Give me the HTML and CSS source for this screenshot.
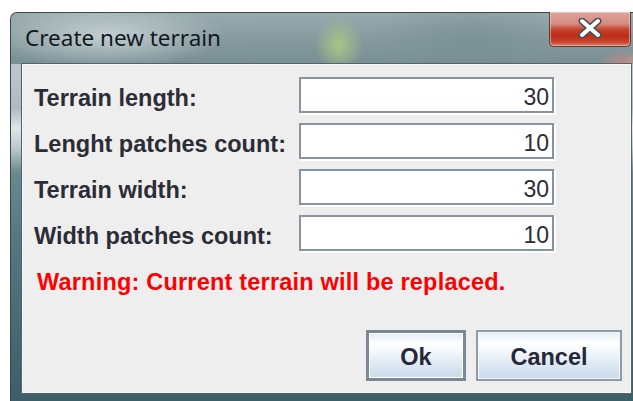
FILE: index.html
```html
<!DOCTYPE html>
<html lang="en">
<head>
<meta charset="utf-8">
<title>Create new terrain</title>
<link rel="stylesheet" href="styles.css">
</head>
<body>
<div class="window">
  <div class="titlebar">
    <span class="title">Create new terrain</span>
    <button class="close" type="button" aria-label="Close">
      <svg width="26" height="20" viewBox="0 0 26 20">
        <path d="M5 3 L21 17 M21 3 L5 17" stroke="#4a4f55" stroke-width="7" stroke-linecap="round" fill="none"/>
        <path d="M5 3 L21 17 M21 3 L5 17" stroke="#ffffff" stroke-width="4" stroke-linecap="round" fill="none"/>
      </svg>
    </button>
  </div>
  <div class="client">
    <div class="form">
      <label class="lbl" for="f-len">Terrain length:</label>
      <input class="field" id="f-len" type="text" value="30">
      <label class="lbl" for="f-lenp">Lenght patches count:</label>
      <input class="field" id="f-lenp" type="text" value="10">
      <label class="lbl" for="f-wid">Terrain width:</label>
      <input class="field" id="f-wid" type="text" value="30">
      <label class="lbl" for="f-widp">Width patches count:</label>
      <input class="field" id="f-widp" type="text" value="10">
    </div>
    <p class="warning">Warning: Current terrain will be replaced.</p>
    <div class="actions">
      <button class="btn btn-default" type="button">Ok</button>
      <button class="btn btn-cancel" type="button">Cancel</button>
    </div>
  </div>
</div>
</body>
</html>
```
FILE: styles.css
```css
html, body {
  margin: 0;
  padding: 0;
  background: #ffffff;
  overflow: hidden;
  width: 633px;
  height: 401px;
}

/* Aero-style window frame */
.window {
  margin: 12px 0 0 10px;
  width: 632px;
  height: 400px;
  box-sizing: border-box;
  border-top: 1px solid #3a4648;
  border-left: 1px solid #3a4648;
  border-radius: 7px 0 0 0;
  display: flex;
  flex-direction: column;
  background:
    linear-gradient(to bottom,
      #aab7b9 0px, #bcc7c9 60px, #aebbbe 95px, #dfe6e7 115px, #bccacc 135px,
      #6b888e 160px, #587880 220px, #4a6c73 300px, #3d5e66 389px);
}

.titlebar {
  height: 51px;
  flex: none;
  display: flex;
  align-items: flex-start;
  border-radius: 7px 0 0 0;
  background:
    radial-gradient(ellipse 24px 28px at 328px 32px, rgba(170, 200, 132, 0.95), rgba(170, 200, 132, 0) 100%),
    radial-gradient(ellipse 26px 14px at 612px 50px, rgba(220, 130, 130, 0.65), rgba(220, 130, 130, 0) 100%),
    radial-gradient(ellipse 16px 14px at 628px 52px, rgba(190, 210, 150, 0.7), rgba(190, 210, 150, 0) 100%),
    radial-gradient(ellipse 120px 34px at 95px 22px, rgba(200, 212, 215, 0.9), rgba(200, 212, 215, 0) 100%),
    radial-gradient(ellipse 100px 40px at 460px 26px, rgba(120, 142, 146, 0.7), rgba(120, 142, 146, 0) 100%),
    linear-gradient(to bottom, #98aaad 0%, #85999c 55%, #788f93 100%);
}

.title {
  font-family: "Noto Sans", "Open Sans", sans-serif;
  font-size: 22.5px;
  color: #14181f;
  padding: 11px 0 0 14px;
  line-height: 27px;
}

.close {
  margin: -1px 11px 0 auto;
  width: 82px;
  height: 35px;
  padding: 0;
  border: 1px solid #5c3a36;
  border-top: none;
  border-radius: 0 0 5px 5px;
  background:
    linear-gradient(to bottom,
      #dca49c 0%, #d58b80 35%, #c6412c 52%, #bd2c16 70%, #c6452f 88%, #d9806e 100%);
  box-shadow: inset 0 0 0 1px rgba(255, 230, 225, 0.45);
  display: flex;
  align-items: center;
  justify-content: center;
}

.close svg {
  display: block;
  margin-top: -2px;
}

/* Swing dialog content */
.client {
  flex: none;
  height: 329px;
  margin: 0 0 0 11px;
  width: 609px;
  border: 1px solid #f6f6f6;
  box-shadow: 0 0 0 1px #4f6569;
  background: #eeeeee;
  display: flex;
  flex-direction: column;
  padding: 12px 8px 11px 11px;
  box-sizing: border-box;
  font-family: "Liberation Sans", Arial, sans-serif;
}

.form {
  display: grid;
  grid-template-columns: 265px 257px;
  grid-auto-rows: 38px;
  row-gap: 8px;
}

.lbl {
  font-weight: bold;
  font-size: 23.5px;
  color: #2c2c36;
  padding-top: 4px;
  align-self: center;
  white-space: nowrap;
}

.field {
  width: 255px;
  height: 36px;
  box-sizing: border-box;
  margin: 0;
  border: 2px solid #8794a0;
  box-shadow: 2px 2px 0 #ffffff;
  background: #ffffff;
  font-family: "Liberation Sans", Arial, sans-serif;
  font-size: 23px;
  color: #2c2c36;
  text-align: right;
  padding: 4px 3px 0 4px;
  outline: none;
}

.warning {
  margin: 16px 0 0 3px;
  font-weight: bold;
  font-size: 23.5px;
  line-height: 27px;
  letter-spacing: 0.2px;
  color: #ff0000;
}

.actions {
  margin-top: auto;
  display: flex;
  justify-content: flex-end;
  gap: 10px;
}

.btn {
  height: 51px;
  box-sizing: border-box;
  font-family: "Liberation Sans", Arial, sans-serif;
  font-weight: bold;
  font-size: 23.5px;
  color: #262838;
  padding: 4px 0 0;
  background: linear-gradient(to bottom, #e2ebf5 0%, #ffffff 22%, #f4f8fc 40%, #dde8f3 70%, #c9dbeb 100%);
}

.btn-default {
  width: 100px;
  border: 3px solid #7c8894;
  box-shadow: inset 0 0 0 1px #ffffff;
}

.btn-cancel {
  width: 146px;
  border: 2px solid #8d9cab;
  box-shadow: inset 0 0 0 1px #f4f8fb;
}
```
